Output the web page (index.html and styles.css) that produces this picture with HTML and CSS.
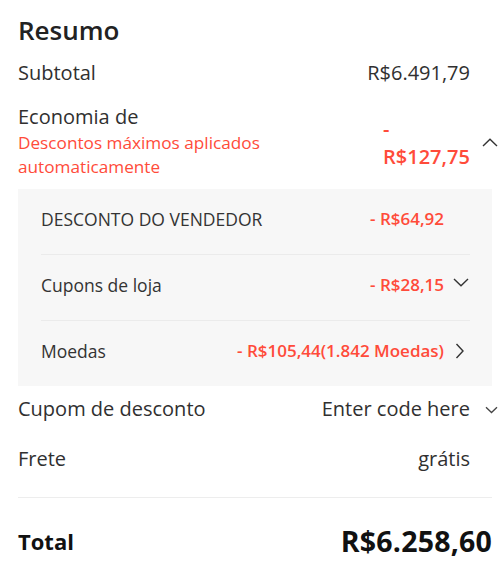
FILE: index.html
```html
<!DOCTYPE html>
<html lang="pt-BR">
<head>
<meta charset="utf-8">
<title>Resumo</title>
<link rel="stylesheet" href="styles.css">
</head>
<body>
<div class="summary">
  <h2 class="title">Resumo</h2>

  <div class="row row-subtotal">
    <span class="label">Subtotal</span>
    <span class="value">R$6.491,79</span>
    <span class="slot"></span>
  </div>

  <div class="row row-savings">
    <div class="savings-left">
      <div class="label">Economia de</div>
      <div class="note">Descontos máximos aplicados automaticamente</div>
    </div>
    <span class="savings-value">- R$127,75</span>
    <span class="slot">
      <svg class="icon chev-up" width="16" height="9" viewBox="0 0 16 9"><path d="M1 8 L8 1.2 L15 8" fill="none" stroke="#333" stroke-width="1.4"/></svg>
    </span>
  </div>

  <div class="discounts">
    <div class="drow drow-first">
      <span class="dlabel">DESCONTO DO VENDEDOR</span>
      <span class="dvalue">- R$64,92</span>
      <span class="dslot"></span>
    </div>
    <div class="drow">
      <span class="dlabel">Cupons de loja</span>
      <span class="dvalue">- R$28,15</span>
      <span class="dslot">
        <svg class="icon chev-down" width="16" height="9" viewBox="0 0 16 9"><path d="M1 1 L8 7.8 L15 1" fill="none" stroke="#333" stroke-width="1.4"/></svg>
      </span>
    </div>
    <div class="drow">
      <span class="dlabel">Moedas</span>
      <span class="dvalue">- R$105,44(1.842 Moedas)</span>
      <span class="dslot">
        <svg class="icon chev-right" width="9" height="16" viewBox="0 0 9 16"><path d="M1.5 1 L8 8 L1.5 15" fill="none" stroke="#333" stroke-width="1.4"/></svg>
      </span>
    </div>
  </div>

  <div class="row row-coupon">
    <span class="label">Cupom de desconto</span>
    <span class="value">Enter code here</span>
    <span class="slot">
      <svg class="icon chev-small" width="13" height="8" viewBox="0 0 13 8"><path d="M1 1.2 L6.5 6.5 L12 1.2" fill="none" stroke="#444" stroke-width="1.3"/></svg>
    </span>
  </div>

  <div class="row row-shipping">
    <span class="label">Frete</span>
    <span class="value">grátis</span>
    <span class="slot"></span>
  </div>

  <div class="total">
    <span class="total-label">Total</span>
    <span class="total-value">R$6.258,60</span>
  </div>
</div>
</body>
</html>
```

FILE: styles.css
```css
html, body {
  margin: 0;
  padding: 0;
  background: #ffffff;
}

body {
  font-family: "Open Sans", "Noto Sans", "Liberation Sans", sans-serif;
  color: #303030;
}

.summary {
  width: 474px;
  margin-left: 18px;
}

.title {
  margin: 15px 0 0;
  font-size: 26px;
  line-height: 30px;
  font-weight: 600;
  color: #222222;
}

.row {
  display: flex;
  align-items: center;
}

.label {
  flex: 1;
  font-size: 20px;
  line-height: 28px;
}

.value {
  font-size: 20px;
  line-height: 28px;
  white-space: nowrap;
}

.slot {
  width: 22px;
  flex: none;
  display: flex;
  align-items: center;
  overflow: visible;
}

.icon {
  flex: none;
  display: block;
}

.row-subtotal {
  margin-top: 14px;
}

.row-savings {
  margin-top: 16px;
}

.savings-left {
  flex: 1;
}

.note {
  font-size: 17.2px;
  line-height: 24px;
  color: #ff4b3a;
  width: 260px;
}

.savings-value {
  width: 87px;
  flex: none;
  font-size: 20px;
  line-height: 28px;
  font-weight: 600;
  color: #ff4b3a;
  text-align: left;
  margin-top: 4px;
}

.chev-up {
  margin-left: 12px;
  margin-top: 2px;
}

.discounts {
  margin-top: 10px;
  background: #f7f7f7;
  padding: 0 22px 0 23px;
}

.drow {
  display: flex;
  align-items: center;
  padding: 18px 0 23px;
  border-top: 1px solid #ebebeb;
}

.drow-first {
  border-top: none;
  padding-top: 18px;
}

.dlabel {
  flex: 1;
  font-size: 17.5px;
  line-height: 24px;
  color: #333333;
}

.dvalue {
  font-size: 17px;
  line-height: 24px;
  font-weight: 600;
  color: #ff4b3a;
  white-space: nowrap;
}

.dslot {
  width: 26px;
  flex: none;
  display: flex;
  align-items: center;
}

.chev-down {
  margin-left: 9px;
  margin-top: -6px;
}

.chev-right {
  margin-left: 11px;
}

.row-coupon {
  margin-top: 9px;
}

.chev-small {
  margin-left: 15px;
  margin-top: 2px;
}

.row-shipping {
  margin-top: 22px;
  padding-bottom: 24px;
  border-bottom: 1px solid #ededed;
}

.total {
  display: flex;
  align-items: center;
  justify-content: space-between;
  margin-top: 25px;
}

.total-label {
  font-size: 22px;
  line-height: 36px;
  font-weight: 700;
  color: #111111;
}

.total-value {
  font-size: 28.5px;
  line-height: 36px;
  font-weight: 700;
  color: #111111;
  letter-spacing: 0.2px;
}
```
